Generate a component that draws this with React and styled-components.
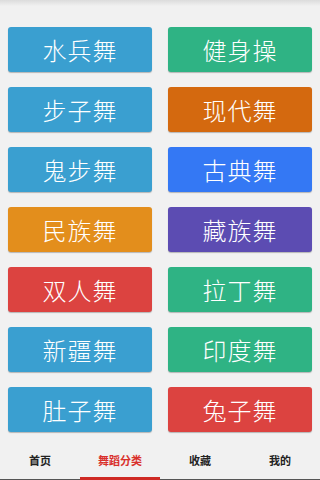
import React from 'react'
import styled, { createGlobalStyle } from 'styled-components';

const Global = createGlobalStyle`
    html, body {
        margin:0;
        padding:0;
        background-color:#f1f1f1;
        font-family:"Noto Sans CJK SC", "Noto Sans", sans-serif;
    }
`;

const Page = styled.div`
    width:100%;
    height:480px;
    display:flex;
    flex-direction:column;
    background:linear-gradient(#dcdcdc 0px, #f1f1f1 6px);
`;

const Grid = styled.div`
    flex:1;
    display:grid;
    grid-template-columns:1fr 1fr;
    grid-auto-rows:45px;
    column-gap:16px;
    row-gap:15px;
    padding:27px 8px 0 8px;
`;

const Tile = styled.div`
    background-color:${p => p.color};
    border-radius:3px;
    box-shadow:0 1px 1px rgba(0,0,0,0.25);
    color:white;
    font-size:24px;
    font-weight:300;
    letter-spacing:1px;
    display:flex;
    align-items:center;
    justify-content:center;
`;

const TabBar = styled.div`
    height:40px;
    display:grid;
    grid-template-columns:repeat(4, 1fr);
    border-bottom:1px solid #555;
`;

const Tab = styled.div`
    display:flex;
    align-items:center;
    justify-content:center;
    font-size:11px;
    font-weight:bold;
    color:${p => p.active ? '#d9302c' : '#222'};
    border-bottom:${p => p.active ? '3px solid #cf2a24' : '3px solid transparent'};
    margin-bottom:-1px;
    padding-top:3px;
`;

const dances = [
  ['水兵舞', '#3a9fd0'],
  ['健身操', '#2fb384'],
  ['步子舞', '#3a9fd0'],
  ['现代舞', '#d4690f'],
  ['鬼步舞', '#3a9fd0'],
  ['古典舞', '#3478f4'],
  ['民族舞', '#e38e1c'],
  ['藏族舞', '#5c4cb2'],
  ['双人舞', '#dc4340'],
  ['拉丁舞', '#2fb384'],
  ['新疆舞', '#3a9fd0'],
  ['印度舞', '#2fb384'],
  ['肚子舞', '#3a9fd0'],
  ['兔子舞', '#dc4340'],
];

const tabs = ['首页', '舞蹈分类', '收藏', '我的'];

const App = () => {
  return (
    <Page>
      <Global/>
      <Grid>
        {dances.map(([name, color]) => (
          <Tile key={name} color={color}>{name}</Tile>
        ))}
      </Grid>
      <TabBar>
        {tabs.map((t, i) => (
          <Tab key={t} active={i === 1}>{t}</Tab>
        ))}
      </TabBar>
    </Page>
  )
}

export default App
